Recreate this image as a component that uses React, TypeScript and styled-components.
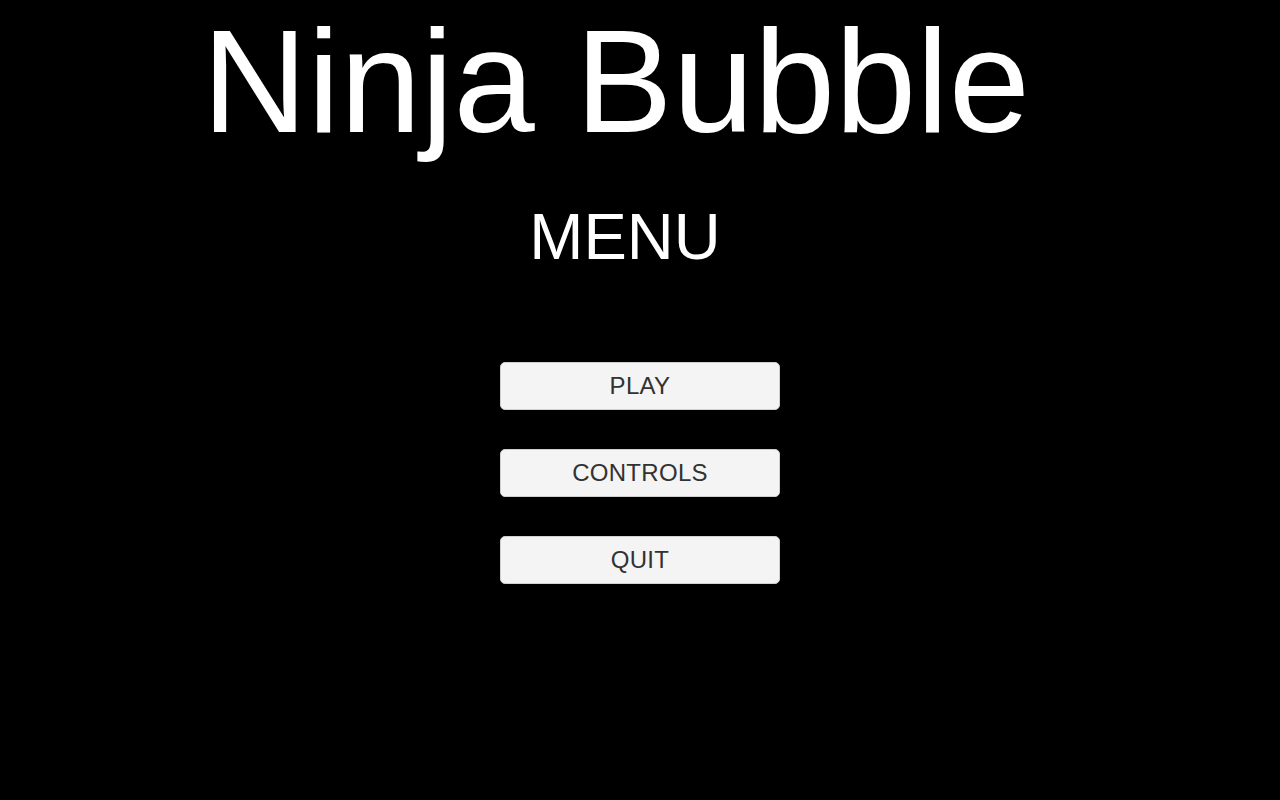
import React from 'react';
import styled, { createGlobalStyle } from 'styled-components';

const GlobalStyle = createGlobalStyle`
html, body {
    margin: 0;
    padding: 0;
    background: #000;
}
body {
    font-family: "Liberation Sans", Arial, sans-serif;
}
`

const Screen = styled.main`
display: flex;
flex-direction: column;
align-items: center;
width: 1280px;
height: 800px;
padding-top: 9px;
box-sizing: border-box;
background: #000;
overflow: hidden;
`

interface IShift {
    shift?: number,
}

const Title = styled.h1<IShift>`
margin: 0;
margin-right: ${({ shift }) => (shift || 0) * 2}px;
font-size: 146px;
font-weight: 400;
line-height: 1;
color: #fff;
white-space: nowrap;
`

const SubTitle = styled.h2<IShift>`
margin: 49px 0 0;
margin-right: ${({ shift }) => (shift || 0) * 2}px;
font-size: 65px;
font-weight: 400;
line-height: 1;
color: #fff;
`

const Buttons = styled.nav`
display: flex;
flex-direction: column;
gap: 39px;
margin-top: 93px;
`

const MenuBtn = styled.button`
display: flex;
align-items: center;
justify-content: center;
width: 280px;
height: 48px;
padding: 0 0 1px;
border: 1px solid #d0d0d0;
border-radius: 5px;
background: #f4f4f4;
font-family: "Liberation Sans", Arial, sans-serif;
font-size: 24px;
letter-spacing: 0.3px;
color: #323232;
cursor: pointer;
`

const App = () => {
    return (
        <>
            <GlobalStyle />
            <Screen>
                <Title shift={24}>Ninja Bubble</Title>
                <SubTitle shift={15}>MENU</SubTitle>
                <Buttons>
                    <MenuBtn>PLAY</MenuBtn>
                    <MenuBtn>CONTROLS</MenuBtn>
                    <MenuBtn>QUIT</MenuBtn>
                </Buttons>
            </Screen>
        </>
    );
};

export default App;
